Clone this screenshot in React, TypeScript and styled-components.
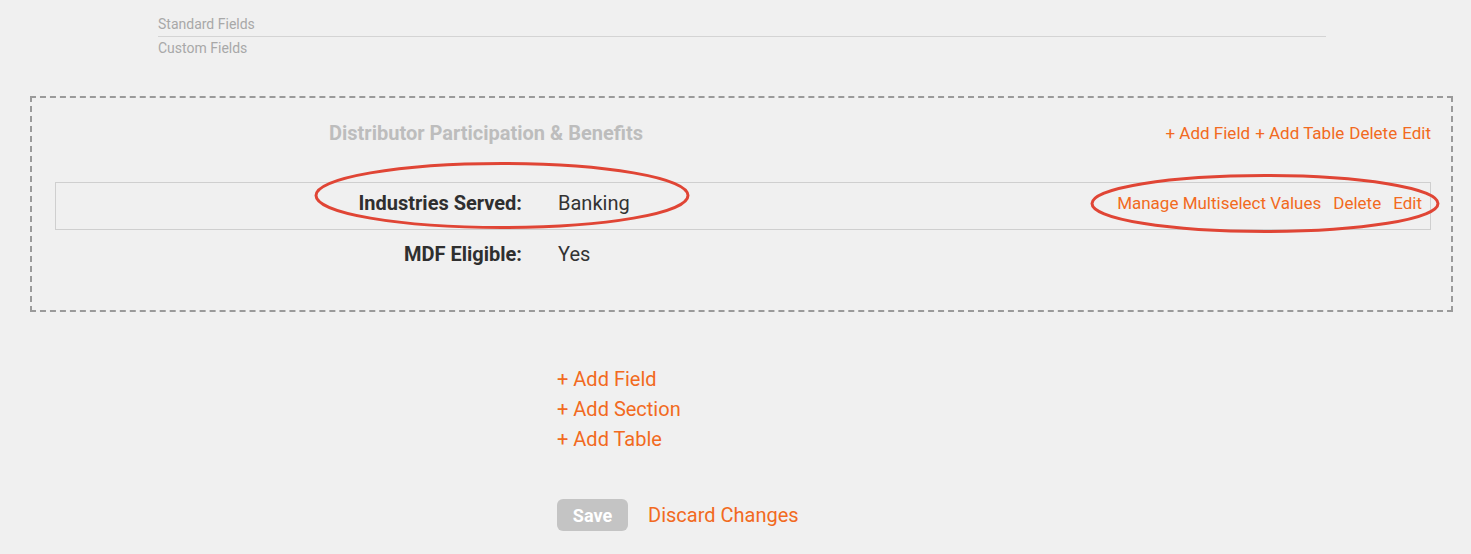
import React from "react";
import styled, { createGlobalStyle } from "styled-components";

const GlobalStyle = createGlobalStyle`
  html, body {
    margin: 0;
    padding: 0;
    background: #f0f0f0;
    font-family: Roboto, "Liberation Sans", Arial, sans-serif;
  }
`;

type Field = {
  label: string;
  value: string;
  highlighted?: boolean;
};

const fields: Field[] = [
  { label: "Industries Served:", value: "Banking", highlighted: true },
  { label: "MDF Eligible:", value: "Yes" },
];

export default function App() {
  return (
    <>
      <GlobalStyle />
      <Page>
        <Tabs>
          <Tab>Standard Fields</Tab>
          <Tab>Custom Fields</Tab>
        </Tabs>

        <Section>
          <SectionHeader>
            <SectionTitle>Distributor Participation &amp; Benefits</SectionTitle>
            <HeaderActions>
              <Link>+ Add Field</Link>
              <Link>+ Add Table</Link>
              <Link>Delete</Link>
              <Link>Edit</Link>
            </HeaderActions>
          </SectionHeader>

          <Rows>
            {fields.map((f) => (
              <Row key={f.label} $active={!!f.highlighted}>
                <Label>{f.label}</Label>
                <Value>{f.value}</Value>
                {f.highlighted && (
                  <RowActions>
                    <Link>Manage Multiselect Values</Link>
                    <Link>Delete</Link>
                    <Link>Edit</Link>
                  </RowActions>
                )}
              </Row>
            ))}
          </Rows>

          {/* red annotation ellipses drawn over the screenshot */}
          <Annotation
            style={{ left: 282, top: 64, width: 376, height: 67 }}
            viewBox="0 0 376 67"
          >
            <ellipse cx="188" cy="33.5" rx="186" ry="32" />
          </Annotation>
          <Annotation
            style={{ left: 1058, top: 76, width: 350, height: 59 }}
            viewBox="0 0 350 59"
          >
            <ellipse cx="175" cy="29.5" rx="173" ry="28" />
          </Annotation>
        </Section>

        <AddLinks>
          <BigLink>+ Add Field</BigLink>
          <BigLink>+ Add Section</BigLink>
          <BigLink>+ Add Table</BigLink>
        </AddLinks>

        <Footer>
          <SaveButton disabled>Save</SaveButton>
          <BigLink>Discard Changes</BigLink>
        </Footer>
      </Page>
    </>
  );
}

/* ===== styled components ===== */

const orange = "#f26a21";

const Page = styled.div`
  padding: 13px 18px 24px 30px;
  min-height: 554px;
  box-sizing: border-box;
`;

const Tabs = styled.div`
  display: flex;
  flex-direction: column;
  margin: 0 127px 0 128px;
`;

const Tab = styled.div`
  font-size: 14px;
  color: #a8a8a8;
  line-height: 22px;
  height: 23px;

  &:first-child {
    border-bottom: 1px solid #d4d4d4;
  }
`;

const Section = styled.div`
  position: relative;
  margin-top: 36px;
  border: 2px dashed #9a9a9a;
  padding: 18px 20px 30px 23px;
  height: 216px;
  box-sizing: border-box;
`;

const SectionHeader = styled.div`
  display: flex;
  align-items: center;
  justify-content: space-between;
  height: 34px;
`;

const SectionTitle = styled.div`
  margin-left: 274px;
  font-size: 20px;
  font-weight: 700;
  color: #bdbdbd;
`;

const HeaderActions = styled.div`
  display: flex;
  gap: 5px;
  font-size: 17px;
`;

const Link = styled.span`
  color: ${orange};
  cursor: pointer;
`;

const Rows = styled.div`
  display: flex;
  flex-direction: column;
  margin-top: 32px;
`;

const Row = styled.div<{ $active: boolean }>`
  display: flex;
  align-items: center;
  height: 48px;
  padding-bottom: ${(p) => (p.$active ? "7px" : "0")};
  box-sizing: border-box;
  border: 1px solid ${(p) => (p.$active ? "#cfcfcf" : "transparent")};
  padding-right: 8px;
`;

const Label = styled.div`
  width: 466px;
  text-align: right;
  font-size: 20px;
  font-weight: 700;
  color: #2f2f2f;
`;

const Value = styled.div`
  margin-left: 36px;
  font-size: 20px;
  color: #333;
  flex: 1;
`;

const RowActions = styled.div`
  display: flex;
  gap: 12px;
  font-size: 17px;
`;

const Annotation = styled.svg`
  position: absolute;
  pointer-events: none;
  overflow: visible;

  ellipse {
    fill: none;
    stroke: #e04535;
    stroke-width: 3;
  }
`;

const AddLinks = styled.div`
  display: flex;
  flex-direction: column;
  margin: 56px 0 0 527px;
  gap: 7px;
`;

const BigLink = styled.span`
  color: ${orange};
  font-size: 20px;
  line-height: 23px;
  cursor: pointer;
`;

const Footer = styled.div`
  display: flex;
  align-items: center;
  gap: 20px;
  margin: 48px 0 0 527px;
`;

const SaveButton = styled.button`
  width: 71px;
  height: 32px;
  border: none;
  border-radius: 6px;
  background: #c4c4c4;
  color: #fff;
  font-family: inherit;
  font-size: 18px;
  font-weight: 700;
`;
